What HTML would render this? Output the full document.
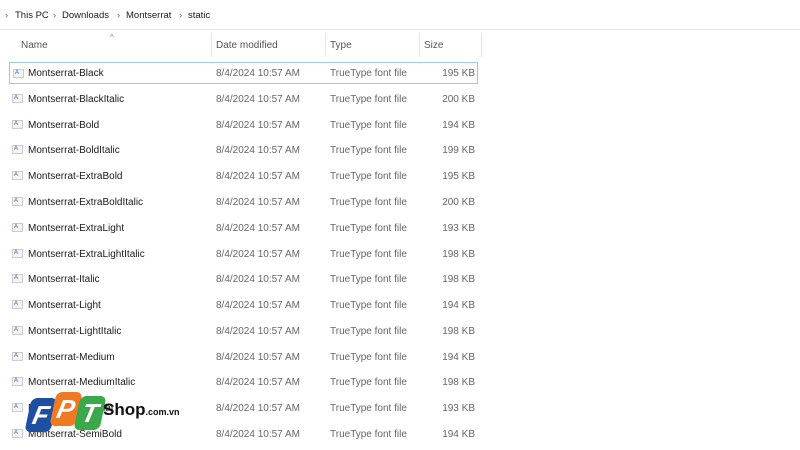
<!DOCTYPE html>
<html><head><style>
body{margin:0;width:800px;height:450px;overflow:hidden;background:#fff;font-family:"Liberation Sans",sans-serif;font-size:10px;color:#1a1a1a;position:relative}
.bc{position:absolute;top:0;left:0;width:800px;height:29px;border-bottom:1px solid #e8e8e8;}
.bc span{position:absolute;top:10px;font-size:9.5px}
.hd{position:absolute;top:40px;font-size:10px;color:#555}
.sep{position:absolute;top:33px;width:1px;height:24px;background:#e5e5e5}
.row{position:absolute;left:0;width:800px;height:22px}
.row .n{position:absolute;left:28px;top:6px;color:#1a1a1a}
.row .d{position:absolute;left:216px;top:6px;color:#666}
.row .t{position:absolute;left:330px;top:6px;color:#666}
.row .s{position:absolute;right:325px;top:6px;color:#666}
.ic{position:absolute;left:12px;top:6px;width:11px;height:9px;background:#f4f4f4;border:1px solid #ccc;box-sizing:border-box}
.ic:after{content:"A";position:absolute;left:1px;top:0;font-size:6px;color:#2a5bb8}
.sel{border:1px solid #9fc7ec;left:9px;width:469px;box-sizing:border-box}
.pg{position:absolute;width:26px;height:34px;transform:skewX(-12deg);border-radius:6px;color:#fff;font-weight:bold;font-size:26px;text-align:center;line-height:34px;font-style:italic}
</style></head><body>
<div class="bc">
<span style="left:5px;color:#666">›</span><span style="left:15px">This PC</span>
<span style="left:53px;color:#666">›</span><span style="left:62px">Downloads</span>
<span style="left:117px;color:#666">›</span><span style="left:126px">Montserrat</span>
<span style="left:179px;color:#666">›</span><span style="left:188px">static</span>
</div>
<div style="position:absolute;left:110px;top:33px;font-size:8px;color:#888">^</div>
<div class="hd" style="left:21px">Name</div>
<div class="hd" style="left:216px">Date modified</div>
<div class="hd" style="left:330px">Type</div>
<div class="hd" style="left:424px">Size</div>
<div class="sep" style="left:211px"></div><div class="sep" style="left:325px"></div><div class="sep" style="left:419px"></div><div class="sep" style="left:481px"></div>
<div class="row sel" style="top:62px"><div class="ic" style="left:3px"></div><div class="n" style="left:18px;top:5px">Montserrat-Black</div><div class="d" style="left:206px;top:5px">8/4/2024 10:57 AM</div><div class="t" style="left:320px;top:5px">TrueType font file</div><div class="s" style="right:2px;top:5px">195 KB</div></div>
<div class="row" style="top:88px"><div class="ic"></div><div class="n">Montserrat-BlackItalic</div><div class="d">8/4/2024 10:57 AM</div><div class="t">TrueType font file</div><div class="s">200 KB</div></div>
<div class="row" style="top:114px"><div class="ic"></div><div class="n">Montserrat-Bold</div><div class="d">8/4/2024 10:57 AM</div><div class="t">TrueType font file</div><div class="s">194 KB</div></div>
<div class="row" style="top:139px"><div class="ic"></div><div class="n">Montserrat-BoldItalic</div><div class="d">8/4/2024 10:57 AM</div><div class="t">TrueType font file</div><div class="s">199 KB</div></div>
<div class="row" style="top:165px"><div class="ic"></div><div class="n">Montserrat-ExtraBold</div><div class="d">8/4/2024 10:57 AM</div><div class="t">TrueType font file</div><div class="s">195 KB</div></div>
<div class="row" style="top:191px"><div class="ic"></div><div class="n">Montserrat-ExtraBoldItalic</div><div class="d">8/4/2024 10:57 AM</div><div class="t">TrueType font file</div><div class="s">200 KB</div></div>
<div class="row" style="top:217px"><div class="ic"></div><div class="n">Montserrat-ExtraLight</div><div class="d">8/4/2024 10:57 AM</div><div class="t">TrueType font file</div><div class="s">193 KB</div></div>
<div class="row" style="top:243px"><div class="ic"></div><div class="n">Montserrat-ExtraLightItalic</div><div class="d">8/4/2024 10:57 AM</div><div class="t">TrueType font file</div><div class="s">198 KB</div></div>
<div class="row" style="top:268px"><div class="ic"></div><div class="n">Montserrat-Italic</div><div class="d">8/4/2024 10:57 AM</div><div class="t">TrueType font file</div><div class="s">198 KB</div></div>
<div class="row" style="top:294px"><div class="ic"></div><div class="n">Montserrat-Light</div><div class="d">8/4/2024 10:57 AM</div><div class="t">TrueType font file</div><div class="s">194 KB</div></div>
<div class="row" style="top:320px"><div class="ic"></div><div class="n">Montserrat-LightItalic</div><div class="d">8/4/2024 10:57 AM</div><div class="t">TrueType font file</div><div class="s">198 KB</div></div>
<div class="row" style="top:346px"><div class="ic"></div><div class="n">Montserrat-Medium</div><div class="d">8/4/2024 10:57 AM</div><div class="t">TrueType font file</div><div class="s">194 KB</div></div>
<div class="row" style="top:371px"><div class="ic"></div><div class="n">Montserrat-MediumItalic</div><div class="d">8/4/2024 10:57 AM</div><div class="t">TrueType font file</div><div class="s">198 KB</div></div>
<div class="row" style="top:397px"><div class="ic"></div><div class="n">Montserrat-Regular</div><div class="d">8/4/2024 10:57 AM</div><div class="t">TrueType font file</div><div class="s">193 KB</div></div>
<div class="row" style="top:423px"><div class="ic"></div><div class="n">Montserrat-SemiBold</div><div class="d">8/4/2024 10:57 AM</div><div class="t">TrueType font file</div><div class="s">194 KB</div></div>
<div class="pg" style="left:28px;top:398px;background:#1e4fa3">F</div>
<div class="pg" style="left:53px;top:392px;background:#f07a22">P</div>
<div class="pg" style="left:77px;top:396px;background:#3ba94a">T</div>
<div style="position:absolute;left:103px;top:400px;font-weight:bold;font-size:17px;color:#111">Shop<span style="font-size:9px">.com.vn</span></div>
</body></html>
